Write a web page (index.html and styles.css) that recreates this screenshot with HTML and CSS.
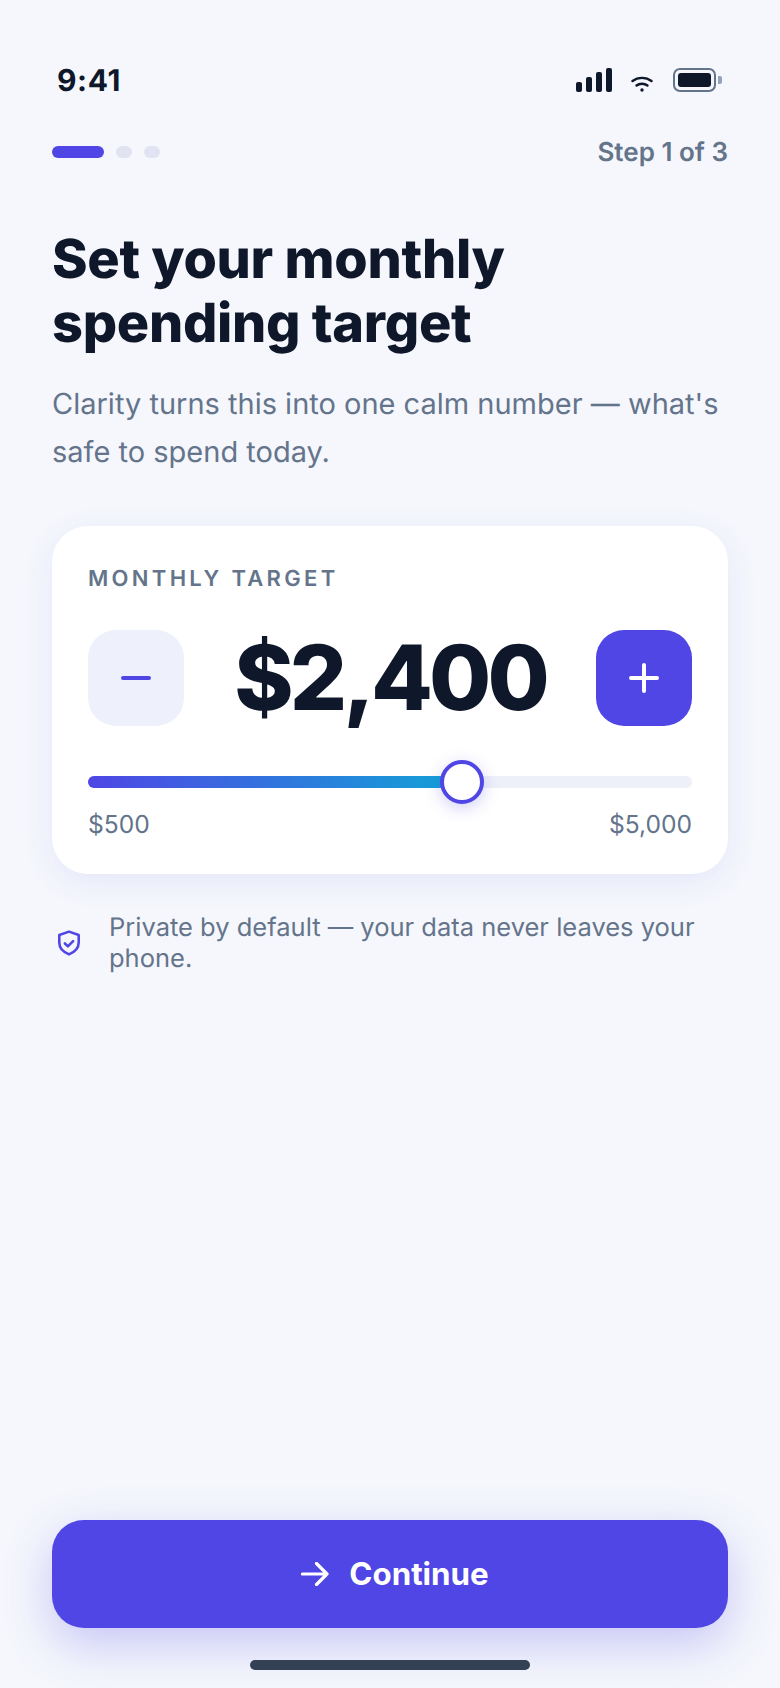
FILE: index.html
```html
<!DOCTYPE html>
<html lang="en">
<head>
<meta charset="utf-8">
<title>Clarity</title>
<link rel="stylesheet" href="styles.css">
</head>
<body>
<main class="screen">
  <header class="status">
    <span class="time">9:41</span>
    <div class="status-icons">
      <div class="signal"><i class="b1"></i><i class="b2"></i><i class="b3"></i><i class="b4"></i></div>
      <svg class="wifi" width="22" height="16" viewBox="0 0 22 16" fill="none" stroke="#0F172A" stroke-width="2.4" stroke-linecap="round"><path d="M1.5 5C7 .8 15 .8 20.5 5"/><path d="M5.5 9.5C8.6 7.1 13.4 7.1 16.5 9.5"/><circle cx="11" cy="14" r="1.7" fill="#0F172A" stroke="none"/></svg>
      <div class="battery"><div class="cell"><div class="charge"></div></div><div class="nub"></div></div>
    </div>
  </header>

  <div class="progress">
    <div class="steps"><span class="step on"></span><span class="step"></span><span class="step"></span></div>
    <span class="step-label">Step 1 of 3</span>
  </div>

  <h1 class="title">Set your monthly<br>spending target</h1>
  <p class="lead">Clarity turns this into one calm number — what's safe to spend today.</p>

  <section class="card">
    <div class="card-label">MONTHLY TARGET</div>
    <div class="stepper">
      <button class="round minus" aria-label="Decrease"><svg width="32" height="32" viewBox="0 0 32 32" fill="none" stroke="#4F46E5" stroke-width="4" stroke-linecap="round"><path d="M3 16H29"/></svg></button>
      <div class="amount">$2,400</div>
      <button class="round plus" aria-label="Increase"><svg width="32" height="32" viewBox="0 0 32 32" fill="none" stroke="#fff" stroke-width="4" stroke-linecap="round"><path d="M3 16H29M16 3V29"/></svg></button>
    </div>
    <div class="slider">
      <div class="fill"><span class="thumb"></span></div>
    </div>
    <div class="range"><span>$500</span><span>$5,000</span></div>
  </section>

  <div class="note">
    <svg class="shield" width="24" height="28" viewBox="0 0 24 28" fill="none" stroke="#4F46E5" stroke-width="2.8" stroke-linecap="round" stroke-linejoin="round"><path d="M12 1.6L22.6 5.2V13.5C22.6 19.5 18 24 12 26.4C6 24 1.4 19.5 1.4 13.5V5.2Z"/><path d="M7.5 14.5L10.8 17.6L16.5 12"/></svg>
    <p>Private by default — your data never leaves your phone.</p>
  </div>

  <div class="spacer"></div>

  <button class="cta">
    <svg width="28" height="24" viewBox="0 0 28 24" fill="none" stroke="#fff" stroke-width="3.2" stroke-linecap="round" stroke-linejoin="round"><path d="M1.5 12H26M15.5 1.5L26 12L15.5 22.5"/></svg>
    <span>Continue</span>
  </button>
  <div class="home"></div>
</main>
</body>
</html>
```

FILE: styles.css
```css
* { box-sizing: border-box; }
html, body { margin: 0; padding: 0; }
body { background: #F5F7FC; font-family: Inter, "Liberation Sans", sans-serif; color: #0F172A; text-rendering: geometricPrecision; }
.screen { width: 780px; height: 1688px; display: flex; flex-direction: column; padding: 0 52px 18px; overflow: hidden; }
.status { display: flex; justify-content: space-between; align-items: center; height: 36px; margin-top: 62px; padding: 0 6px 0 5px; }
.time { margin-top: 2px; font-size: 30px; font-weight: 700; letter-spacing: 0.6px; line-height: 36px; }
.status-icons { display: flex; align-items: center; }
.signal { display: flex; align-items: flex-end; gap: 4px; height: 24px; }
.signal i { display: block; width: 6px; background: #0F172A; border-radius: 2px; }
.b1 { height: 10px; } .b2 { height: 15px; } .b3 { height: 20px; } .b4 { height: 24px; }
.wifi { margin: 8px 0 0 19px; }
.battery { display: flex; align-items: center; gap: 2px; margin-left: 20px; }
.cell { width: 43px; height: 24px; border: 2px solid #64748B; border-radius: 7px; padding: 3px; }
.charge { width: 100%; height: 100%; background: #0F172A; border-radius: 3px; }
.nub { width: 4px; height: 8px; background: #94A3B8; border-radius: 0 2px 2px 0; }
.progress { display: flex; justify-content: space-between; align-items: center; margin-top: 38px; height: 32px; }
.steps { display: flex; gap: 12px; }
.step { display: block; width: 16px; height: 12px; border-radius: 6px; background: #E2E3F2; }
.step.on { width: 52px; background: #4F46E5; }
.step-label { font-size: 26px; font-weight: 600; color: #64748B; }
.title { margin: 60px 0 0; font-size: 54px; font-weight: 850; line-height: 64px; letter-spacing: -0.3px; }
.lead { margin: 24px 0 0; font-size: 29px; line-height: 48px; color: #64748B; }
.card { margin-top: 50px; background: #fff; border-radius: 36px; padding: 40px 36px 35px; box-shadow: 0 8px 32px rgba(79, 70, 229, 0.09); }
.card-label { font-size: 22px; font-weight: 600; letter-spacing: 3.3px; line-height: 27px; color: #64748B; }
.stepper { display: flex; justify-content: space-between; align-items: center; margin-top: 37px; }
.round { width: 96px; height: 96px; border: 0; border-radius: 28px; padding: 0; display: flex; align-items: center; justify-content: center; }
.minus { background: #EEF1FB; }
.plus { background: #4F46E5; }
.amount { font-size: 90px; font-weight: 830; line-height: 96px; letter-spacing: -3.9px; }
.slider { margin-top: 50px; height: 12px; border-radius: 6px; background: #EEF0F9; }
.fill { position: relative; width: 374px; height: 12px; border-radius: 6px; background: linear-gradient(90deg, #4F46E5, #12A3D6); }
.thumb { position: absolute; right: -22px; top: -16px; width: 44px; height: 44px; border-radius: 50%; background: #fff; border: 4.5px solid #4F46E5; box-shadow: 0 4px 16px rgba(79, 70, 229, 0.25); }
.range { display: flex; justify-content: space-between; margin-top: 21px; font-size: 24.6px; line-height: 30px; color: #64748B; }
.note { display: flex; align-items: center; gap: 29px; margin-top: 38px; padding-left: 6px; }
.note p { margin: 0; font-size: 25.5px; line-height: 31px; color: #64748B; }
.spacer { flex: 1; }
.cta { flex: none; height: 108px; border: 0; border-radius: 32px; padding: 0 0 0 10px; background: #4F46E5; color: #fff; display: flex; align-items: center; justify-content: center; gap: 20px; font-family: inherit; font-size: 31.3px; font-weight: 650; box-shadow: 0 16px 48px rgba(79, 70, 229, 0.28); }
.home { flex: none; align-self: center; width: 280px; height: 10px; margin-top: 32px; border-radius: 5px; background: #334155; }
```
